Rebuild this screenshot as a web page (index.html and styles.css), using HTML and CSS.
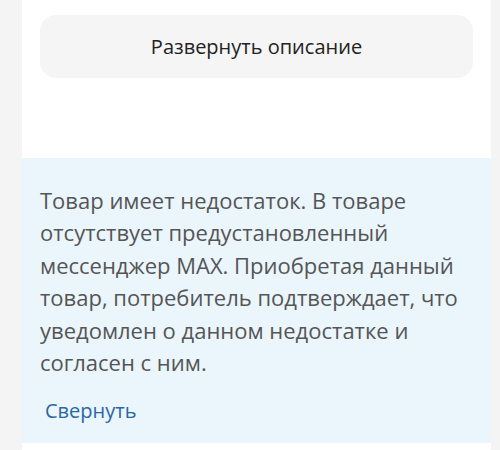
FILE: index.html
```html
<!DOCTYPE html>
<html lang="ru">
<head>
<meta charset="utf-8">
<link rel="stylesheet" href="styles.css">
</head>
<body>
<div class="card">
  <div class="top">
    <button class="expand">Развернуть описание</button>
  </div>
  <div class="notice">
    <p class="notice-text">Товар имеет недостаток. В товаре отсутствует предустановленный мессенджер MAX. Приобретая данный товар, потребитель подтверждает, что уведомлен о данном недостатке и согласен с ним.</p>
    <a class="collapse" href="#">Свернуть</a>
  </div>
  <div class="bottom"></div>
</div>
</body>
</html>
```
FILE: styles.css
```css
html, body {
  margin: 0;
  padding: 0;
  background: #f4f4f4;
  font-family: "Open Sans", "Noto Sans", sans-serif;
}
.card {
  margin: 0 9px 0 22px;
  background: #fff;
  height: 450px;
  display: flex;
  flex-direction: column;
}
.top {
  padding: 15px 18px 0 18px;
  height: 158px;
  flex: none;
  box-sizing: border-box;
}
.expand {
  display: block;
  width: 100%;
  height: 63px;
  border: none;
  border-radius: 16px;
  background: #f5f5f5;
  color: #222;
  font-family: "Open Sans", sans-serif;
  font-size: 20px;
}
.notice {
  background: #ebf5fc;
  height: 285px;
  flex: none;
  box-sizing: border-box;
  padding: 26px 18px 0 18px;
}
.notice-text {
  margin: 0;
  font-size: 22px;
  line-height: 32.4px;
  color: #555;
}
.collapse {
  display: inline-block;
  margin: 19px 0 0 5px;
  font-size: 20px;
  line-height: 28px;
  color: #2a67a3;
  text-decoration: none;
}
```
